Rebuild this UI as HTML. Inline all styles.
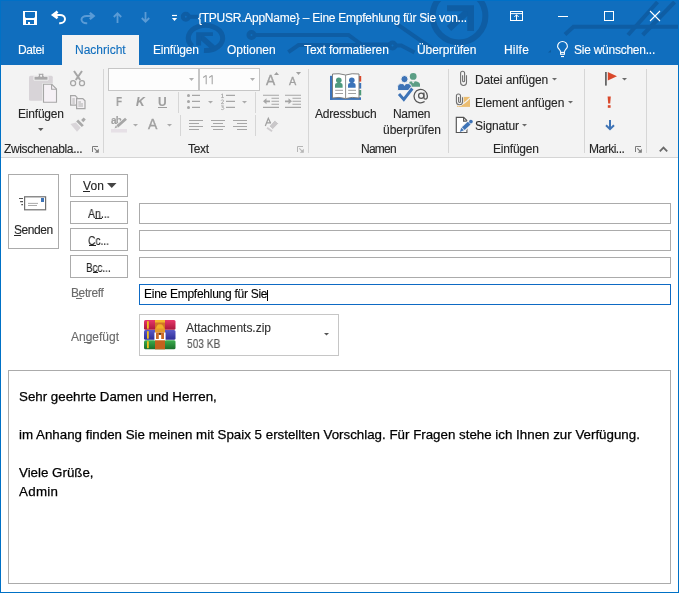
<!DOCTYPE html>
<html><head><meta charset="utf-8">
<style>
html,body{margin:0;padding:0}
body{width:679px;height:593px;position:relative;overflow:hidden;background:#fff;font-family:"Liberation Sans",sans-serif;color:#262626}
.a{position:absolute}
.t{position:absolute;white-space:nowrap;line-height:1;font-size:12px;will-change:transform;-webkit-text-stroke:0.12px currentColor}
.w{color:#fff}
.sep{position:absolute;width:1px;background:#d6d6d6}
.btn{position:absolute;box-sizing:border-box;border:1px solid #ababab;background:#fff}
.inp{position:absolute;box-sizing:border-box;border:1px solid #ababab;background:#fff}
svg{position:absolute;overflow:visible}
</style></head><body>

<!-- title + tab bar -->
<div class="a" style="left:0;top:0;width:679px;height:65px;background:#106ebe"></div>
<svg style="left:0;top:0" width="679" height="65" viewBox="0 0 679 65">
 <g stroke="#0e5da4" stroke-width="4" fill="none">
  <circle cx="185.8" cy="16.8" r="3"/>
  <line x1="188.8" y1="16.8" x2="198" y2="16.8"/>
  <path d="M204 50.55 A17.2 12.6 0 1 0 192.3 46.1" stroke-width="5"/>
  <path d="M199.5 35.5 L213 47.5" stroke-width="5.5"/>
  <circle cx="251.5" cy="35" r="3"/>
  <path d="M254.5 35 H348.5 L361.5 44.6 H389.5"/>
  <path d="M288.3 52.2 L298.6 45 H365"/>
  <circle cx="392.5" cy="45.5" r="3"/>
  <path d="M395.5 45.5 H401.3 L414.5 52.5"/>
  <path d="M396.7 23.9 L432 48.5"/>
  <circle cx="459" cy="16" r="26.4" stroke-width="6"/>
  <path d="M449 28.5 L469 10" stroke-width="6.5"/>
  <path d="M565 34.5 L573.5 26.8 H679"/>
  <path d="M628 35 L657.5 2"/>
  <path d="M642.7 35 L674.6 2"/>
 </g>
 <g fill="#0e5da4">
  <path d="M196.2 32.2 H212.9 V36.1 H201.1 V45.6 H196.2 Z"/>
  <path d="M447 5.2 H474 V31 H467.3 V11.3 H447 Z"/>
 </g>
</svg>

<!-- QAT icons -->
<svg style="left:23px;top:11px" width="14" height="14" viewBox="0 0 14 14">
 <rect x="0" y="0" width="14" height="14" fill="#fff"/>
 <path d="M2 1 H12 V6 L11 7 H3 L2 6 Z" fill="#106ebe"/>
 <path d="M3 9 H11 V13 H7 V11 H5 V13 H3 Z" fill="#106ebe"/>
</svg>
<svg style="left:48px;top:8px" width="22" height="20" viewBox="0 0 22 20">
 <path d="M5.5 6.9 H12 A5 4.2 0 0 1 12 15.3 H11.2" stroke="#fff" stroke-width="2" fill="none"/>
 <path d="M9.6 3.6 L5.2 6.9 L9.6 10.2" stroke="#fff" stroke-width="2.7" fill="none" stroke-linejoin="miter"/>
</svg>
<svg style="left:77px;top:8px" width="22" height="20" viewBox="0 0 22 20">
 <path d="M15.5 8 H9.5 A5 3.6 0 0 0 9.5 15.2 H10.2" stroke="#5a9bd6" stroke-width="2" fill="none"/>
 <path d="M12.8 4.8 L16.6 8 L12.8 11.2" stroke="#5a9bd6" stroke-width="2.4" fill="none"/>
</svg>
<svg style="left:113px;top:12px" width="9" height="11" viewBox="0 0 9 11">
 <path d="M4.5 11 V1.5 M0.8 5 L4.5 1.2 L8.2 5" stroke="#5b9bd5" stroke-width="1.8" fill="none"/>
</svg>
<svg style="left:141px;top:12px" width="9" height="11" viewBox="0 0 9 11">
 <path d="M4.5 0 V9.5 M0.8 6 L4.5 9.8 L8.2 6" stroke="#5b9bd5" stroke-width="1.8" fill="none"/>
</svg>
<svg style="left:171px;top:14px" width="8" height="8" viewBox="0 0 8 8">
 <rect x="1" y="0.9" width="5" height="1.2" fill="#fff"/>
 <path d="M0.9 4 H6.1 L3.5 7.1 Z" fill="#fff"/>
</svg>

<div class="t w" style="left:198px;top:11.8px;letter-spacing:-0.25px">{TPUSR.AppName} – Eine Empfehlung für Sie von...</div>

<!-- window controls -->
<svg style="left:510px;top:11px" width="13" height="10" viewBox="0 0 13 10">
 <rect x="0.5" y="0.5" width="12" height="9" stroke="#fff" fill="none"/>
 <line x1="0.5" y1="2.6" x2="12.5" y2="2.6" stroke="#fff"/>
 <path d="M6.5 9.5 V3.6 M4.3 6 L6.5 3.8 L8.7 6" stroke="#fff" fill="none" stroke-width="1"/>
</svg>
<div class="a" style="left:558px;top:16px;width:10px;height:1px;background:#fff"></div>
<div class="a" style="left:604px;top:11px;width:10px;height:10px;box-sizing:border-box;border:1px solid #fff"></div>
<svg style="left:650px;top:11px" width="10" height="10" viewBox="0 0 10 10">
 <path d="M0 0 L10 10 M10 0 L0 10" stroke="#fff" stroke-width="1.1"/>
</svg>

<!-- tabs -->
<div class="a" style="left:62px;top:35px;width:77px;height:30px;background:#f3f3f3"></div>
<div class="t w" style="left:17.5px;top:43.8px;letter-spacing:-0.4px">Datei</div>
<div class="t" style="left:74.5px;top:43.8px;color:#106ebe">Nachricht</div>
<div class="t w" style="left:153px;top:43.8px;letter-spacing:-0.2px">Einfügen</div>
<div class="t w" style="left:227px;top:43.8px">Optionen</div>
<div class="t w" style="left:304px;top:43.8px;letter-spacing:-0.08px">Text formatieren</div>
<div class="t w" style="left:417px;top:43.8px;letter-spacing:-0.08px">Überprüfen</div>
<div class="t w" style="left:503.5px;top:43.8px;letter-spacing:0.2px">Hilfe</div>
<svg style="left:552px;top:38px" width="20" height="22" viewBox="0 0 20 22">
 <path d="M8.6 13.9 C8.4 11.6 5.6 10.6 5.6 8.4 A4.9 4.9 0 0 1 15.4 8.4 C15.4 10.6 12.6 11.6 12.4 13.9" stroke="#fff" stroke-width="1.15" fill="none"/>
 <rect x="8.6" y="14.4" width="3.8" height="1.9" stroke="#fff" stroke-width="1.1" fill="none"/>
 <rect x="9" y="18" width="3" height="1.1" fill="#fff"/>
</svg>
<div class="t w" style="left:573.5px;top:43.8px;letter-spacing:-0.25px">Sie wünschen...</div>

<svg style="left:548px;top:49px" width="4" height="4" viewBox="0 0 4 4"><path d="M0 3.6 L3 0.8 V3.6 Z" fill="#0d5a9e"/></svg>
<!-- ribbon -->
<div class="a" style="left:1px;top:65px;width:677px;height:92px;background:#f3f3f3;border-bottom:1px solid #d5d5d5"></div>

<!-- ===== Zwischenablage ===== -->
<svg style="left:29px;top:73px" width="28" height="30" viewBox="0 0 28 30">
 <rect x="0" y="2.8" width="23.8" height="25" rx="1.5" fill="#d8d4d8"/>
 <path d="M5 3.2 H9.3 V1.5 Q9.3 0.2 10.6 0.2 H13.6 Q14.9 0.2 14.9 1.5 V3.2 H19 V7.2 H5 Z" fill="#a9a8a9" stroke="#f3f3f3" stroke-width="1"/>
 <circle cx="12.1" cy="2.8" r="1.1" fill="#f3f3f3"/>
 <path d="M14.5 11.3 H22.8 L27.5 16 V29.3 H14.5 Z" fill="#f6f1f6" stroke="#f3f3f3" stroke-width="2.2"/>
 <path d="M14.5 11.3 H22.8 L27.5 16 V29.3 H14.5 Z" fill="#f6f1f6" stroke="#a6a6a6" stroke-width="1.1"/>
 <path d="M22.6 11.3 V16.2 H27.5" fill="none" stroke="#a6a6a6" stroke-width="1.1"/>
</svg>
<div class="t" style="left:17.5px;top:107.8px;letter-spacing:-0.2px">Einfügen</div>
<svg style="left:38px;top:128px" width="6" height="3" viewBox="0 0 6 3"><path d="M0 0 H5.5 L2.75 3 Z" fill="#595959"/></svg>

<svg style="left:66px;top:68px" width="24" height="20" viewBox="0 0 24 20">
 <path d="M8 3 L14.2 12 M16 3 L9.8 12" stroke="#a6a6a6" stroke-width="2"/>
 <circle cx="7.1" cy="15.2" r="2.5" stroke="#a6a6a6" stroke-width="1.3" fill="#f3f3f3"/>
 <circle cx="16" cy="15.2" r="2.5" stroke="#a6a6a6" stroke-width="1.3" fill="#f3f3f3"/>
</svg>
<svg style="left:66px;top:92px" width="24" height="20" viewBox="0 0 24 20">
 <path d="M4.6 3.6 H9.2 L11 5.4 V13.2 H4.6 Z" fill="#f3f0f3" stroke="#a6a6a6" stroke-width="1.2"/>
 <path d="M6.3 7 H8.8 M6.3 9 H8.8 M6.3 11 H8.8" stroke="#a6a6a6" stroke-width="0.9"/>
 <path d="M10.6 6.6 H16.8 L19 8.8 V16.6 H10.6 Z" fill="#f3f0f3" stroke="#a6a6a6" stroke-width="1.2"/>
 <path d="M12.3 10 H15 M12.3 12 H17 M12.3 14 H17" stroke="#a6a6a6" stroke-width="0.9"/>
</svg>
<svg style="left:66px;top:112px" width="24" height="24" viewBox="0 0 24 24">
 <g transform="translate(14,11.3) rotate(-45)">
  <path d="M-2.4 -3.5 L-7.3 -6.2 L-8.1 3.9 L-2.6 3.6 Z" fill="#d9d5d9"/>
  <rect x="-1.4" y="-4" width="2.8" height="8" fill="#a9a9a9"/>
  <rect x="3.1" y="-1.5" width="3.6" height="3" fill="#a9a9a9"/>
 </g>
</svg>
<div class="t" style="left:4px;top:142.8px;letter-spacing:-0.35px">Zwischenabla...</div>
<svg style="left:92px;top:146px" width="7" height="7" viewBox="0 0 7 7">
 <path d="M0.5 6 V0.5 H6" stroke="#7a7a7a" fill="none"/>
 <path d="M2.3 2.3 L4.8 4.8" stroke="#7a7a7a" stroke-width="1.1"/><path d="M2.8 6.8 H6.8 V2.8 Z" fill="#7a7a7a"/>
</svg>
<div class="sep" style="left:103px;top:69px;height:84px"></div>

<!-- ===== Text ===== -->
<div class="a" style="left:108px;top:68px;width:91px;height:23px;box-sizing:border-box;border:1px solid #c6c6c6;background:#fdfdfd"></div>
<svg style="left:189px;top:78px" width="6" height="3" viewBox="0 0 6 3"><path d="M0 0 H5 L2.5 3 Z" fill="#b0b0b0"/></svg>
<div class="a" style="left:199px;top:68px;width:61px;height:23px;box-sizing:border-box;border:1px solid #c6c6c6;background:#fdfdfd"></div>
<svg style="left:200px;top:74px" width="16" height="12" viewBox="0 0 16 12">
 <path d="M6.2 1.3 V10.2 M3.2 3.5 L6.2 1.3 M12.2 1.3 V10.2 M9.2 3.5 L12.2 1.3" stroke="#a3a3a3" stroke-width="1.05" fill="none"/>
</svg>
<svg style="left:250px;top:78px" width="6" height="3" viewBox="0 0 6 3"><path d="M0 0 H5 L2.5 3 Z" fill="#b0b0b0"/></svg>

<div class="t" style="left:266.3px;top:73.6px;font-size:13.8px;color:#a0a0a0;-webkit-text-stroke:0.35px #a0a0a0">A</div>
<svg style="left:274px;top:72px" width="6" height="3" viewBox="0 0 6 3"><path d="M0 3 H5 L2.5 0 Z" fill="#a0a0a0"/></svg>
<div class="t" style="left:289.3px;top:75.8px;font-size:10.8px;color:#a0a0a0;-webkit-text-stroke:0.3px #a0a0a0">A</div>
<svg style="left:296px;top:72px" width="6" height="3" viewBox="0 0 6 3"><path d="M0 0 H5 L2.5 3 Z" fill="#a0a0a0"/></svg>

<div class="t" style="left:116.3px;top:95.5px;font-weight:bold;color:#9e9e9e;transform:scaleX(0.82);transform-origin:0 0">F</div>
<div class="t" style="left:135.5px;top:95.5px;font-weight:bold;font-style:italic;color:#9e9e9e">K</div>
<div class="t" style="left:158px;top:95.5px;font-weight:bold;color:#9e9e9e">U</div>
<div class="a" style="left:158px;top:107px;width:9px;height:1px;background:#9e9e9e"></div>
<div class="sep" style="left:178px;top:92px;height:21px"></div>

<svg style="left:186px;top:93px" width="62" height="17" viewBox="0 0 62 17">
 <g fill="#a6a6a6"><circle cx="2.5" cy="2.4" r="1.5"/><circle cx="2.5" cy="8.4" r="1.5"/><circle cx="2.5" cy="14.4" r="1.5"/></g>
 <path d="M6 2.4 H14 M6 8.4 H14 M6 14.4 H14" stroke="#a6a6a6" stroke-width="1.1"/>
 <path d="M22 8 H27 L24.5 10.6 Z" fill="#ababab"/>
 <path d="M40 2.4 H49 M40 8.4 H49 M40 14.4 H49" stroke="#a6a6a6" stroke-width="1.1"/>
 <path d="M56 8 H61 L58.5 10.6 Z" fill="#ababab"/>
</svg>
<svg style="left:219px;top:92px" width="8" height="18" viewBox="0 0 8 18">
 <g fill="none" stroke="#a6a6a6" stroke-width="0.85">
  <path d="M2.3 2.6 L3.5 1.9 V5.6 M2.2 5.6 H4.8"/>
  <path d="M2.1 8.7 Q2.3 7.9 3.4 7.9 Q4.6 7.9 4.6 8.9 Q4.6 9.7 2.1 11.7 H4.9"/>
  <path d="M2.1 13.9 H4.6 L3.2 15.3 Q4.9 15.3 4.9 16.4 Q4.9 17.6 3.4 17.6 Q2.4 17.6 2 17.1"/>
 </g>
</svg>
<div class="sep" style="left:255px;top:92px;height:21px"></div>
<svg style="left:262px;top:94px" width="40" height="15" viewBox="0 0 40 15">
 <g stroke="#a6a6a6" stroke-width="1.1">
  <path d="M1 1.3 H17 M9.5 4.3 H17 M9.5 7.3 H17 M9.5 10.3 H17 M1 13.4 H17"/>
  <path d="M23 1.3 H39 M30.5 4.3 H39 M30.5 7.3 H39 M30.5 10.3 H39 M23 13.4 H39"/>
 </g>
 <path d="M1 7.3 L4.5 4.3 V6.4 H8 V8.2 H4.5 V10.3 Z" fill="#a6a6a6"/>
 <path d="M30 7.3 L26.5 4.3 V6.4 H23 V8.2 H26.5 V10.3 Z" fill="#a6a6a6"/>
</svg>

<svg style="left:110px;top:117px" width="64" height="17" viewBox="0 0 64 17">
 <rect x="1" y="12" width="16" height="3.5" fill="#e6e0e6"/>
 <path d="M23 7 H28 L25.5 9.6 Z" fill="#ababab"/>
 <path d="M57 7 H62 L59.5 9.6 Z" fill="#ababab"/>
</svg>
<div class="t" style="left:111px;top:116px;font-size:10px;font-weight:bold;color:#a0a0a0;letter-spacing:-0.7px">ab</div>
<svg style="left:110px;top:117px" width="20" height="14" viewBox="0 0 20 14">
 <path d="M6 10.5 L16 1.8" stroke="#f3f3f3" stroke-width="4.4"/>
 <path d="M7.3 9.4 L16 1.8" stroke="#a6a6a6" stroke-width="2.8"/>
 <path d="M4.5 11.6 L5.8 8.6 L7.6 10.3 Z" fill="#a6a6a6"/>
</svg>
<div class="t" style="left:148px;top:117px;font-size:14px;color:#a0a0a0;-webkit-text-stroke:0.35px #a0a0a0">A</div>
<div class="sep" style="left:180px;top:115px;height:21px"></div>
<svg style="left:188px;top:119px" width="60" height="12" viewBox="0 0 60 12">
 <g stroke="#a6a6a6" stroke-width="1.1">
  <path d="M1 1.5 H15 M1 4.5 H11 M1 7.5 H15 M1 10.5 H11"/>
  <path d="M23 1.5 H37 M25 4.5 H35 M23 7.5 H37 M25 10.5 H35"/>
  <path d="M45 1.5 H59 M49 4.5 H59 M45 7.5 H59 M49 10.5 H59"/>
 </g>
</svg>
<div class="sep" style="left:255px;top:115px;height:21px"></div>
<svg style="left:260px;top:114px" width="24" height="22" viewBox="0 0 24 22">
 <path d="M5.3 11.9 L8.3 4.3 L10.8 9.6 M6.2 8.9 H11" stroke="#a0a0a0" stroke-width="1.25" fill="none"/>
 <path d="M9.1 12.2 L14.8 6.1 L18.7 9.5 L12.8 15.6 Z" fill="#c9c7c9" stroke="#f3f3f3" stroke-width="1" stroke-linejoin="round"/>
 <path d="M6.5 14.4 L7.6 13.1 L12.6 16.6 L11.5 17.9 Z" fill="#cfcccf"/>
</svg>
<div class="t" style="left:188px;top:142.8px;letter-spacing:-0.3px">Text</div>
<svg style="left:297px;top:146px" width="7" height="7" viewBox="0 0 7 7">
 <path d="M0.5 6 V0.5 H6" stroke="#b5b5b5" fill="none"/>
 <path d="M2.3 2.3 L4.8 4.8" stroke="#b5b5b5" stroke-width="1.1"/><path d="M2.8 6.8 H6.8 V2.8 Z" fill="#b5b5b5"/>
</svg>
<div class="sep" style="left:308px;top:69px;height:84px"></div>

<!-- ===== Namen ===== -->
<svg style="left:329px;top:73px" width="34" height="28" viewBox="0 0 34 28">
 <rect x="1" y="2.8" width="2.6" height="24" fill="#3b73b9"/>
 <rect x="1" y="24.3" width="31" height="2.6" fill="#3b73b9"/>
 <rect x="30" y="3" width="2.2" height="5.6" fill="#d9482b"/>
 <rect x="30" y="10" width="2.2" height="5.6" fill="#3b73b9"/>
 <rect x="30" y="17" width="2.2" height="5.4" fill="#4e9a76"/>
 <path d="M3.5 1 Q10 0 16.6 2 Q23 0 30 1 V25 Q23 23.5 16.6 25.6 Q10 23.5 3.5 25 Z" fill="#fff" stroke="#7f7f7f" stroke-width="1"/>
 <path d="M16.6 2 V25.6" stroke="#8f8f8f" stroke-width="1"/>
 <g fill="#4e9a7e"><circle cx="9.8" cy="7.2" r="2.8"/><path d="M6 14.8 V12 Q6 10 8 10 H11.6 Q13.6 10 13.6 12 V14.8 Z"/></g>
 <g fill="#3b73b9"><circle cx="22.8" cy="7.2" r="2.8"/><path d="M19 14.8 V12 Q19 10 21 10 H24.6 Q26.6 10 26.6 12 V14.8 Z"/></g>
 <path d="M6.2 17.3 H14 M6.2 20.5 H14 M19.2 17.3 H27 M19.2 20.5 H27" stroke="#a0a0a0" stroke-width="1"/>
</svg>
<div class="t" style="left:315px;top:107.8px;letter-spacing:-0.2px">Adressbuch</div>

<svg style="left:393px;top:68px" width="40" height="40" viewBox="0 0 40 40">
 <g fill="#5b9e85"><circle cx="20.2" cy="8.4" r="3.4"/><path d="M16 18.8 V15.5 Q16 13.2 18.5 13.2 H22 Q25.6 13.2 27 16 V18.8 Z"/></g>
 <path d="M18.4 13.2 L20.2 15.6 L22 13.2 Z" fill="#f3f3f3"/>
 <g fill="#3d73b6" stroke="#f3f3f3" stroke-width="1"><circle cx="11.5" cy="11.1" r="3.6"/><path d="M4.6 22.6 V18.6 Q4.6 15.6 7.6 15.6 H15.4 Q18.4 15.6 18.4 18.6 V22.6 Z"/></g>
 <path d="M9.8 15.6 L11.5 18 L13.2 15.6 Z" fill="#f3f3f3"/>
 <path d="M6 26 L10.8 31.5 L19.3 20.5" stroke="#f3f3f3" stroke-width="4.6" fill="none"/>
 <path d="M6 26 L10.8 31.5 L19.3 20.5" stroke="#3d73b6" stroke-width="2.9" fill="none"/>
 <circle cx="27.9" cy="27.3" r="8" fill="#f3f3f3"/>
 <path d="M31.6 33.6 A6.7 6.7 0 1 1 34.4 28 Q34.4 31.2 32.4 31.2 Q30.9 31.2 30.9 29.4 V24.4" stroke="#555" stroke-width="1.25" fill="none"/>
 <circle cx="28.2" cy="27.7" r="2.6" stroke="#555" stroke-width="1.25" fill="none"/>
</svg>

<div class="t" style="left:392.5px;top:107.8px;letter-spacing:-0.3px">Namen</div>
<div class="t" style="left:382.5px;top:123.8px">überprüfen</div>
<div class="t" style="left:360.5px;top:142.8px;letter-spacing:-0.75px">Namen</div>
<div class="sep" style="left:448px;top:69px;height:84px"></div>

<!-- ===== Einfügen ===== -->
<svg style="left:453px;top:68px" width="20" height="20" viewBox="0 0 20 20">
 <path d="M9.6 7.3 V12.8 A1 1 0 0 0 11.6 12.8 V5.2 A2 2 0 0 0 7.6 5.2 V14.5 A2.95 2.95 0 0 0 13.5 14.5 V7.3" stroke="#6e6e6e" stroke-width="1.1" fill="none"/>
</svg>
<div class="t" style="left:475px;top:73.8px;letter-spacing:-0.12px">Datei anfügen</div>
<svg style="left:552px;top:78px" width="5" height="3" viewBox="0 0 5 3"><path d="M0 0 H5 L2.5 2.6 Z" fill="#6a6a6a"/></svg>

<svg style="left:452px;top:90px" width="20" height="20" viewBox="0 0 20 20">
 <rect x="5.1" y="6.9" width="12.9" height="10" fill="#ebbd70"/>
 <path d="M18.2 7.6 Q12 14.6 5.8 16" stroke="#f3f3f3" stroke-width="1.2" fill="none"/>
 <path d="M3.2 6 A3.25 3.25 0 0 1 9.7 6 V7 H11.7 V11.75 A4.25 4.25 0 0 1 3.2 11.75 Z" fill="#f3f3f3"/>
 <path d="M6.6 6.9 V11.55 A0.95 0.95 0 0 0 8.5 11.55 V6.05 A2.05 2.05 0 0 0 4.4 6.05 V11.75 A3.05 3.05 0 0 0 10.5 11.75 V7.3" stroke="#6e6e6e" stroke-width="1.1" fill="none"/>
</svg>
<div class="t" style="left:475px;top:96.8px;letter-spacing:-0.1px">Element anfügen</div>
<svg style="left:568px;top:101px" width="5" height="3" viewBox="0 0 5 3"><path d="M0 0 H5 L2.5 2.6 Z" fill="#6a6a6a"/></svg>

<svg style="left:452px;top:114px" width="24" height="22" viewBox="0 0 24 22">
 <path d="M4.3 3.3 H11.6 L14.9 6.6 V18.5 H4.3 Z" fill="#fff" stroke="#555" stroke-width="1.15"/>
 <path d="M11.6 3.3 V7.1 H14.9" fill="none" stroke="#555" stroke-width="1.15"/>
 <path d="M11 15 L19.4 7.1" stroke="#f3f3f3" stroke-width="6" stroke-linecap="round"/>
 <path d="M7.8 18 L9.4 13.8 L11.9 16.3 Z" fill="#3d73b6"/>
 <path d="M11.3 14.7 L17.2 9.1" stroke="#3d73b6" stroke-width="3.9"/>
 <circle cx="18.9" cy="7.6" r="1.85" fill="#3d73b6"/>
</svg>
<div class="t" style="left:475px;top:119.8px;letter-spacing:-0.1px">Signatur</div>
<svg style="left:522px;top:124px" width="5" height="3" viewBox="0 0 5 3"><path d="M0 0 H5 L2.5 2.6 Z" fill="#6a6a6a"/></svg>
<div class="t" style="left:493px;top:142.8px;letter-spacing:-0.2px">Einfügen</div>
<div class="sep" style="left:584px;top:69px;height:84px"></div>

<!-- ===== Markierung ===== -->
<svg style="left:604px;top:72px" width="24" height="14" viewBox="0 0 24 14">
 <rect x="1" y="0" width="1.8" height="13.6" fill="#666"/>
 <path d="M3.8 0 L13 4.3 L3.8 8.6 Z" fill="#d9482b"/>
 <path d="M18 6 H23 L20.5 8.4 Z" fill="#6a6a6a"/>
</svg>
<svg style="left:607px;top:96px" width="5" height="12" viewBox="0 0 5 12">
 <path d="M0.6 0.5 H3.8 L3.2 7.5 H1.2 Z" fill="#d9482b"/>
 <rect x="0.8" y="9.2" width="2.8" height="2.6" fill="#d9482b"/>
</svg>
<svg style="left:605px;top:120px" width="10" height="10" viewBox="0 0 10 10">
 <path d="M5 0 V9" stroke="#3d73b6" stroke-width="2"/>
 <path d="M1 5.2 L5 9.2 L9 5.2" stroke="#3d73b6" stroke-width="2" fill="none"/>
</svg>
<div class="t" style="left:589px;top:142.8px;letter-spacing:-0.5px">Marki...</div>
<svg style="left:635px;top:146px" width="7" height="7" viewBox="0 0 7 7">
 <path d="M0.5 6 V0.5 H6" stroke="#7a7a7a" fill="none"/>
 <path d="M2.3 2.3 L4.8 4.8" stroke="#7a7a7a" stroke-width="1.1"/><path d="M2.8 6.8 H6.8 V2.8 Z" fill="#7a7a7a"/>
</svg>
<div class="sep" style="left:646px;top:69px;height:84px"></div>
<svg style="left:659px;top:146px" width="9" height="6" viewBox="0 0 9 6">
 <path d="M0.8 5.3 L4.5 1.6 L8.2 5.3" stroke="#6a6a6a" stroke-width="1.8" fill="none"/>
</svg>

<!-- ===== compose ===== -->
<div class="btn" style="left:8px;top:174px;width:51px;height:75px"></div>
<svg style="left:18px;top:195px" width="29" height="16" viewBox="0 0 29 16">
 <rect x="6.6" y="1.8" width="21" height="13" fill="#fff" stroke="#707070" stroke-width="1.2"/>
 <rect x="23" y="3" width="3" height="4" fill="#3d73b6"/>
 <path d="M10 8.4 H20 M10 10.5 H19" stroke="#a0a0a0" stroke-width="0.9"/>
 <path d="M1 3.5 H5 M2.1 6.6 H5 M3.3 9.6 H5" stroke="#555" stroke-width="1.1"/>
</svg>
<div class="t" style="left:14px;top:223.8px;letter-spacing:-0.45px">Senden</div>
<div class="a" style="left:14px;top:235px;width:7px;height:1px;background:#262626"></div>

<div class="btn" style="left:70px;top:174px;width:58px;height:23px"></div>
<div class="t" style="left:83px;top:179.8px;letter-spacing:0.1px">Von</div>
<div class="a" style="left:83px;top:191px;width:7px;height:1px;background:#262626"></div>
<svg style="left:107px;top:183px" width="10" height="5" viewBox="0 0 10 5"><path d="M0 0 H9.5 L4.75 5 Z" fill="#444"/></svg>

<div class="btn" style="left:70px;top:201px;width:58px;height:23px"></div>
<div class="t" style="left:87.5px;top:207.8px;transform:scaleX(0.88);transform-origin:0 0">An...</div>
<div class="a" style="left:94.5px;top:218px;width:7px;height:1px;background:#262626"></div>
<div class="btn" style="left:70px;top:228px;width:58px;height:23px"></div>
<div class="t" style="left:88px;top:234.8px;transform:scaleX(0.85);transform-origin:0 0">Cc...</div>
<div class="a" style="left:88.5px;top:245px;width:7px;height:1px;background:#262626"></div>
<div class="btn" style="left:70px;top:255px;width:58px;height:23px"></div>
<div class="t" style="left:86px;top:261.8px;transform:scaleX(0.82);transform-origin:0 0">Bcc...</div>
<div class="a" style="left:92.5px;top:272px;width:5px;height:1px;background:#262626"></div>

<div class="inp" style="left:139px;top:203px;width:532px;height:21px"></div>
<div class="inp" style="left:139px;top:230px;width:532px;height:21px"></div>
<div class="inp" style="left:139px;top:257px;width:532px;height:21px"></div>

<div class="t" style="left:70.5px;top:286.8px;color:#6a6a6a;letter-spacing:-0.4px">Betreff</div>
<div class="a" style="left:76px;top:298px;width:6px;height:1px;background:#6a6a6a"></div>
<div class="inp" style="left:139px;top:284px;width:532px;height:21px;border-color:#0e6ac4"></div>
<div class="t" style="left:143.5px;top:287.8px;color:#000;letter-spacing:-0.27px">Eine Empfehlung für Sie</div>
<div class="a" style="left:267px;top:290px;width:1px;height:11px;background:#000"></div>

<div class="t" style="left:70.5px;top:330.8px;color:#6a6a6a">Angefügt</div>
<div class="a" style="left:84px;top:342px;width:7px;height:1px;background:#6a6a6a"></div>
<div class="a" style="left:139px;top:314px;width:200px;height:42px;box-sizing:border-box;border:1px solid #c6c6c6;background:#fff"></div>
<svg style="left:144px;top:320px" width="32" height="30" viewBox="0 0 32 30">
 <defs>
  <linearGradient id="gr" x1="0" y1="0" x2="0" y2="1"><stop offset="0" stop-color="#e8386a"/><stop offset="1" stop-color="#a8163c"/></linearGradient>
  <linearGradient id="gb" x1="0" y1="0" x2="0" y2="1"><stop offset="0" stop-color="#5a5ac8"/><stop offset="1" stop-color="#2e2e96"/></linearGradient>
  <linearGradient id="gg" x1="0" y1="0" x2="0" y2="1"><stop offset="0" stop-color="#3cae4e"/><stop offset="1" stop-color="#1a6e2a"/></linearGradient>
 </defs>
 <rect x="0" y="0" width="31.5" height="9.8" rx="1.5" fill="url(#gr)"/>
 <rect x="0" y="10" width="31.5" height="9.8" rx="1.5" fill="url(#gb)"/>
 <rect x="0" y="20.2" width="31.5" height="9" rx="1.5" fill="url(#gg)"/>
 <rect x="3" y="1.2" width="1.8" height="7.5" fill="#f2c01a"/>
 <rect x="3" y="11.2" width="1.8" height="7.5" fill="#f2c01a"/>
 <rect x="3" y="21.2" width="1.8" height="7" fill="#f2c01a"/>
 <rect x="11" y="0" width="10" height="29.2" fill="#d27526"/>
 <rect x="11" y="0" width="10" height="2.5" fill="#f4b82c"/>
 <path d="M12 10 Q12 4.2 16 4.2 Q20 4.2 20 10 Z" fill="#f2b028"/>
 <rect x="11" y="8.5" width="10" height="4" fill="#e49a2a"/>
 <path d="M10.4 12.5 H21.6 V20.5 H10.4 Z" fill="#fff"/>
 <path d="M12 12.5 H20 V19 H17.2 V14.5 H14.8 V19 H12 Z" fill="#cc6a24"/>
 <circle cx="16" cy="14" r="0.9" fill="#3a2010"/>
 <rect x="11" y="20.5" width="10" height="8.7" fill="#c4621e"/>
</svg>
<div class="t" style="left:186px;top:321.8px;color:#333;letter-spacing:-0.03px">Attachments.zip</div>
<div class="t" style="left:186.5px;top:337.8px;color:#555;transform:scaleX(0.85);transform-origin:0 0">503 KB</div>
<svg style="left:324px;top:333px" width="5" height="3" viewBox="0 0 5 3"><path d="M0 0 H5 L2.5 2.6 Z" fill="#555"/></svg>

<div class="a" style="left:8px;top:370px;width:663px;height:214px;box-sizing:border-box;border:1px solid #ababab;background:#fff"></div>
<div class="t" style="left:19px;top:389.9px;font-size:13.34px;color:#000;-webkit-text-stroke:0.25px #000">Sehr geehrte Damen und Herren,</div>
<div class="t" style="left:19px;top:427.9px;font-size:13.34px;color:#000;-webkit-text-stroke:0.25px #000">im Anhang finden Sie meinen mit Spaix 5 erstellten Vorschlag. Für Fragen stehe ich Ihnen zur Verfügung.</div>
<div class="t" style="left:19px;top:465.9px;font-size:13.34px;color:#000;-webkit-text-stroke:0.25px #000">Viele Grüße,</div>
<div class="t" style="left:19px;top:484.9px;font-size:13.34px;color:#000;-webkit-text-stroke:0.25px #000;letter-spacing:0.3px">Admin</div>

<!-- window borders -->
<div class="a" style="left:0;top:0;width:679px;height:1px;background:#0070c6"></div>
<div class="a" style="left:0;top:0;width:1px;height:593px;background:#0071c6"></div>
<div class="a" style="left:678px;top:0;width:1px;height:593px;background:#0071c6"></div>
<div class="a" style="left:0;top:592px;width:679px;height:1px;background:#0071c6"></div>

</body></html>
